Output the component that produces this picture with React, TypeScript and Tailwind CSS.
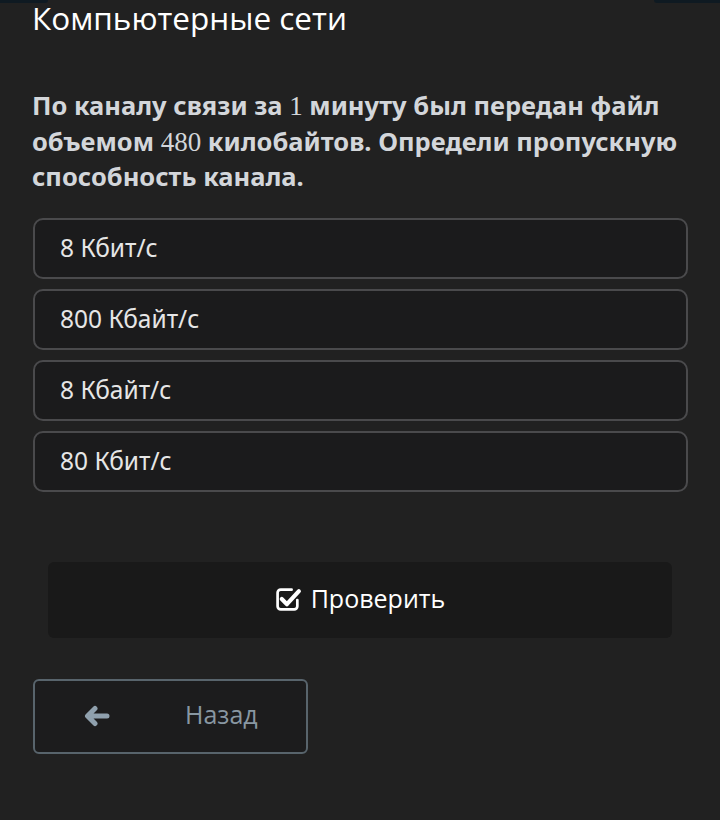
import React from "react";

function CheckIcon() {
  return (
    <svg width="27" height="25" viewBox="0 0 26 24" fill="none">
      <path d="M16 2.5H5.5a3 3 0 0 0-3 3v13a3 3 0 0 0 3 3h13a3 3 0 0 0 3-3v-6" stroke="#ffffff" strokeWidth="2.6" strokeLinecap="round" />
      <path d="M6.5 11.5l5 5L23 4" stroke="#ffffff" strokeWidth="4" strokeLinecap="round" strokeLinejoin="round" />
    </svg>
  );
}

function ArrowIcon() {
  return (
    <svg width="26" height="22" viewBox="0 0 26 22" fill="none">
      <path d="M23 11H5M11 3.5L3.5 11 11 18.5" stroke="#8fa0ad" strokeWidth="5" strokeLinecap="round" strokeLinejoin="round" />
    </svg>
  );
}

const options = ["8 Кбит/с", "800 Кбайт/с", "8 Кбайт/с", "80 Кбит/с"];

export default function App() {
  const sans = { fontFamily: '"Open Sans", "Noto Sans", sans-serif' };
  return (
    <div className="relative w-[720px] h-[820px] overflow-hidden bg-[#212121]" style={sans}>
      <div className="absolute top-0 left-0 w-[48px] h-[3px] bg-[#0f1a22] rounded-br-md" />
      <div className="absolute top-0 right-0 w-[66px] h-[3px] bg-[#0f1a22] rounded-bl-md" />
      <div className="px-8">
        <h1 className="text-[31.5px] leading-[40px] text-white -mt-[2px]">Компьютерные сети</h1>
        <p className="mt-[50px] text-[25.5px] leading-[34.5px] font-bold text-[#d3d6da]" style={{ fontFamily: '"Noto Sans", sans-serif' }}>
          По каналу связи за <span className="font-normal text-[27px]" style={{ fontFamily: '"Liberation Serif", serif' }}>1</span> минуту был передан файл объемом{" "}
          <span className="font-normal text-[27px]" style={{ fontFamily: '"Liberation Serif", serif' }}>480</span> килобайтов. Определи пропускную способность канала.
        </p>
        <div className="mt-[24px] flex flex-col gap-[10px] pl-px">
          {options.map((o) => (
            <div key={o} className="h-[61px] rounded-[10px] border-2 border-[#4a4a4c] bg-[#1b1b1c] flex items-center pl-[25px] text-[24.5px] text-[#e6e6e6]" style={{ fontFamily: '"Noto Sans", sans-serif' }}>
              {o}
            </div>
          ))}
        </div>
        <div className="mx-4 mt-[70px] h-[76px] rounded-md bg-[#191919] flex items-center justify-center gap-[9px] text-white text-[25px]">
          <CheckIcon />
          <span className="-mt-[2px]">Проверить</span>
        </div>
        <div className="mt-[41px] ml-px w-[275px] h-[75px] rounded-md border-2 border-[#58646c] bg-[#1c1c1d] flex items-center text-[#8897a2] text-[25px]">
          <div className="w-[124px] flex justify-center">
            <ArrowIcon />
          </div>
          <span className="ml-[26px] -mt-[2px]">Назад</span>
        </div>
      </div>
    </div>
  );
}
